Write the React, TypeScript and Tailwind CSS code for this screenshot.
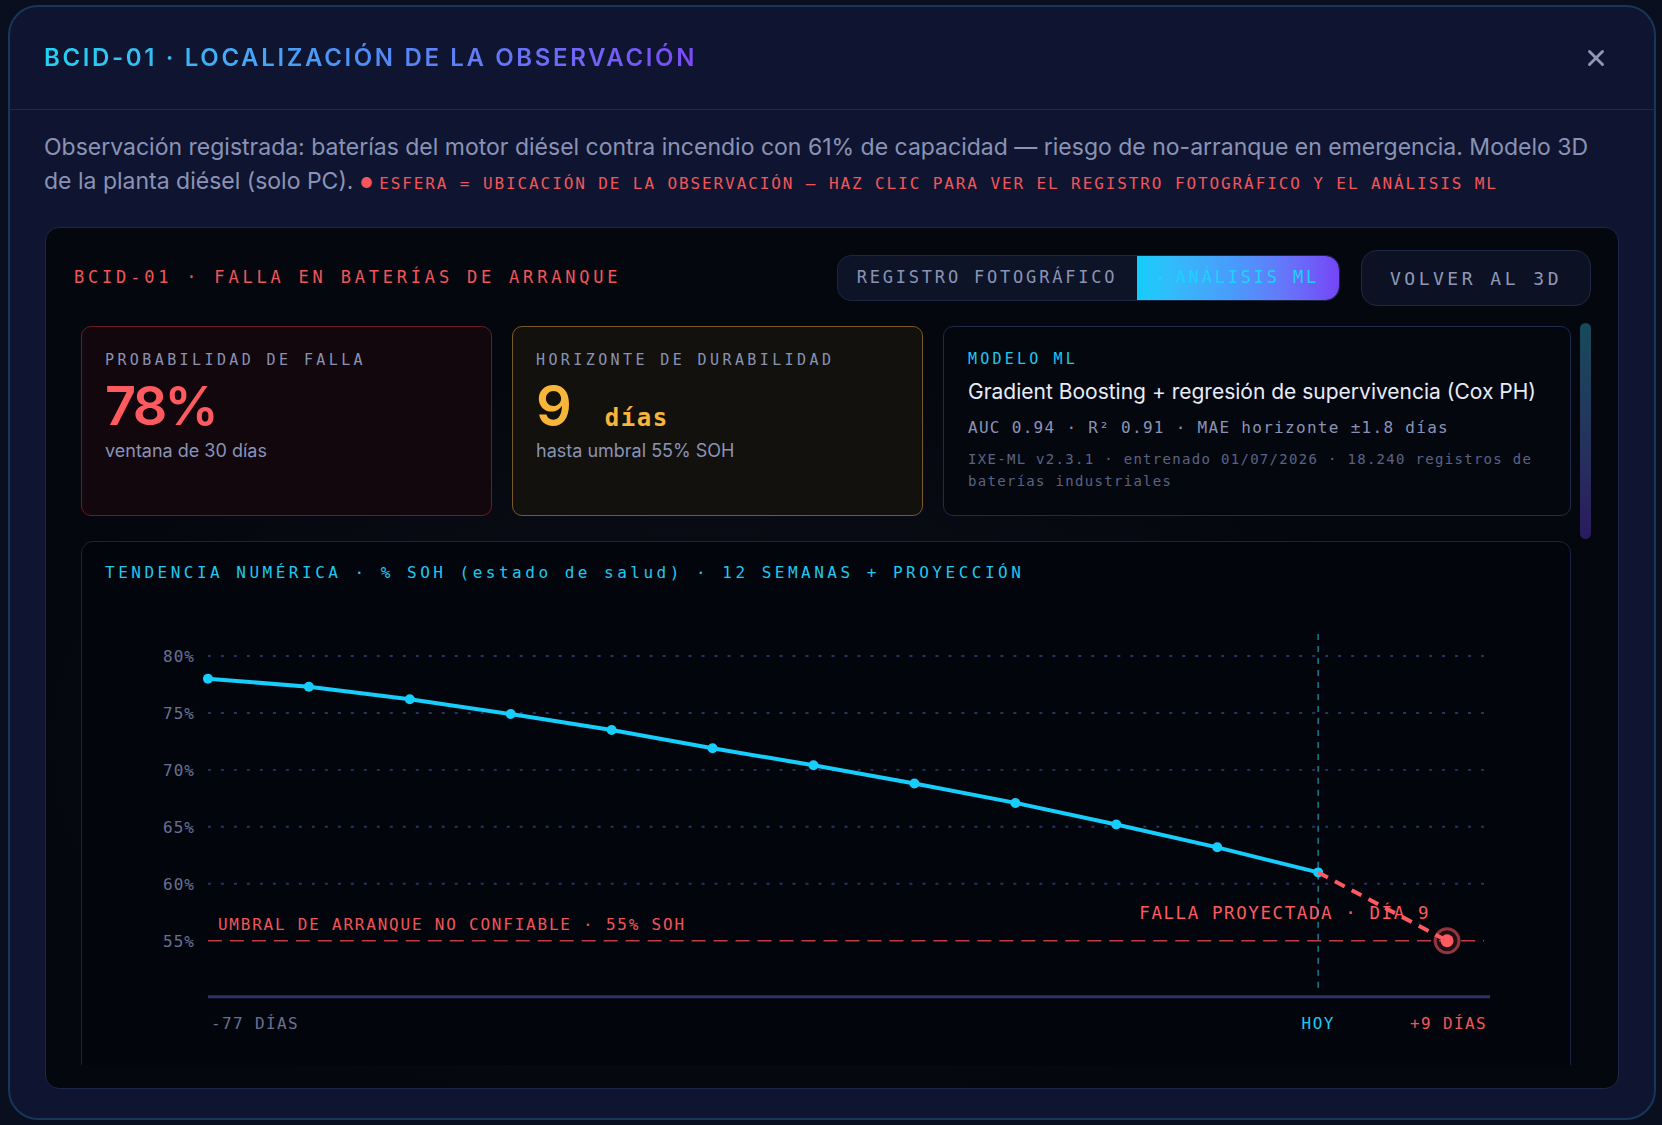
import { X } from "lucide-react";

const MONO = "font-['DejaVu_Sans_Mono',monospace]";

// % SOH semanal, 12 semanas hasta hoy
const soh = [78.0, 77.3, 76.2, 74.9, 73.5, 71.9, 70.4, 68.8, 67.1, 65.2, 63.2, 61.0];

const xOf = (i: number) => 126 + i * 101;
const yOf = (v: number) => 65 + (80 - v) * 11.4;

function TrendChart() {
  const grid = [80, 75, 70, 65, 60];
  const path = soh.map((v, i) => `${i === 0 ? "M" : "L"}${xOf(i)} ${yOf(v)}`).join(" ");
  const hoyX = xOf(11);
  const endX = 1366;
  const endY = yOf(55);

  return (
    <svg viewBox="0 0 1489 490" className={`block h-auto w-full ${MONO}`}>
      {/* grid */}
      {grid.map((g) => (
        <g key={g}>
          <line x1={126} x2={1403} y1={yOf(g)} y2={yOf(g)} stroke="#2a3360" strokeWidth={2} strokeDasharray="3 10" />
          <text x={113} y={yOf(g)} dy="0.36em" textAnchor="end" fill="#687192" fontSize={16} letterSpacing={1}>
            {g}%
          </text>
        </g>
      ))}
      <text x={113} y={endY} dy="0.36em" textAnchor="end" fill="#687192" fontSize={16} letterSpacing={1}>
        55%
      </text>

      {/* umbral */}
      <line x1={126} x2={1403} y1={endY} y2={endY} stroke="#e0484e" strokeOpacity={0.85} strokeWidth={1.6} strokeDasharray="14 8" />
      <text x={136} y={333} dy="0.36em" fill="#ef5558" fontSize={16} letterSpacing={1.8}>
        UMBRAL DE ARRANQUE NO CONFIABLE · 55% SOH
      </text>

      {/* hoy */}
      <line x1={hoyX} x2={hoyX} y1={43} y2={401} stroke="#1a7b95" strokeWidth={1.5} strokeDasharray="6 6" />

      {/* eje */}
      <line x1={126} x2={1409} y1={406} y2={406} stroke="#2b3465" strokeWidth={3} />

      {/* serie */}
      <path d={path} fill="none" stroke="#17cdfb" strokeWidth={4} strokeLinejoin="round" />
      {soh.map((v, i) => (
        <circle key={i} cx={xOf(i)} cy={yOf(v)} r={5} fill="#17cdfb" />
      ))}

      {/* proyección */}
      <line x1={hoyX} y1={yOf(soh[11])} x2={endX} y2={endY} stroke="#ff5a5f" strokeWidth={4} strokeDasharray="11 8" />
      <text x={1349} y={322} dy="0.36em" textAnchor="end" fill="#ff5a5f" fontSize={17.5} letterSpacing={1.6}>
        FALLA PROYECTADA · DÍA 9
      </text>
      <circle cx={endX} cy={endY} r={12} fill="#ff5a5f" fillOpacity={0.12} stroke="#ff5a5f" strokeOpacity={0.55} strokeWidth={3} />
      <circle cx={endX} cy={endY} r={6.5} fill="#ff5a5f" />

      {/* etiquetas eje x */}
      <text x={129} y={433} dy="0.36em" fill="#687192" fontSize={16} letterSpacing={1.4}>
        -77 DÍAS
      </text>
      <text x={hoyX} y={433} dy="0.36em" textAnchor="middle" fill="#1fc8f0" fontSize={16} letterSpacing={1.4}>
        HOY
      </text>
      <text x={1406} y={433} dy="0.36em" textAnchor="end" fill="#f0575b" fontSize={16} letterSpacing={1.4}>
        +9 DÍAS
      </text>
    </svg>
  );
}

export default function App() {
  return (
    <div className="h-screen w-full bg-[#0a0f1f] pt-[5px] pr-[6px] pb-[5px] pl-[8px] font-['Inter',sans-serif]">
      <div className="flex h-full flex-col overflow-hidden rounded-[30px] border-2 border-[#17365a] bg-[#0f1530]">
        {/* Header */}
        <header className="flex h-[103px] shrink-0 items-center justify-between border-b border-[#1e2a4c] pl-[34px] pr-[45px]">
          <h1 className="bg-gradient-to-r from-[#1fd2f2] via-[#4f8df6] to-[#7a4af6] bg-clip-text text-[24px] font-semibold tracking-[0.11em] text-transparent">
            BCID-01 · LOCALIZACIÓN DE LA OBSERVACIÓN
          </h1>
          <X className="h-[26px] w-[26px] text-[#8f98b8]" strokeWidth={2.6} />
        </header>

        {/* Description */}
        <p className="shrink-0 px-[34px] pt-[20px] text-[23px] leading-[34px] text-[#8a93b5]">
          Observación registrada: baterías del motor diésel contra incendio con 61% de capacidad — riesgo de no-arranque en emergencia. Modelo 3D de la planta diésel (solo PC).{" "}
          <span className="align-[1px] text-[14px] text-[#f2555a]">●</span>{" "}
          <span className={`${MONO} text-[16px] tracking-[1.9px] text-[#f2555a]`}>
            ESFERA = UBICACIÓN DE LA OBSERVACIÓN — HAZ CLIC PARA VER EL REGISTRO FOTOGRÁFICO Y EL ANÁLISIS ML
          </span>
        </p>

        {/* Panel */}
        <section className="mx-[35px] mt-[26px] mb-[29px] flex min-h-0 flex-1 flex-col rounded-[14px] border border-[#1b2648] bg-[radial-gradient(ellipse_at_42%_60%,#0d1019_0%,#05070f_55%)] px-[27px] pt-[22px] pb-[23px]">
          <div className="flex h-[56px] shrink-0 items-center justify-between pl-[1px]">
            <h2 className={`${MONO} text-[17px] tracking-[3.8px] text-[#f0555a]`}>
              BCID-01 · FALLA EN BATERÍAS DE ARRANQUE
            </h2>
            <div className="flex items-center gap-[21px]">
              <div className={`${MONO} flex h-[46px] overflow-hidden rounded-[14px] border border-[#1c2542] bg-[#0e1427] text-[17px] tracking-[2.8px]`}>
                <button className="pl-[19px] pr-[20px] text-[#8a93b5]">REGISTRO FOTOGRÁFICO</button>
                <button className="flex items-center gap-[10px] rounded-r-[14px] bg-gradient-to-r from-[#12cdfb] via-[#4a98fb] to-[#7444f6] pl-[20px] pr-[20px] text-[#1fd0ff]">
                  <span className="text-[9px]">◆</span>
                  ANÁLISIS ML
                </button>
              </div>
              <button className={`${MONO} h-[56px] rounded-[16px] border border-[#1f2845] bg-[#0c1224] px-[28px] text-[18px] tracking-[3.5px] text-[#8f98b8]`}>
                VOLVER AL 3D
              </button>
            </div>
          </div>

          {/* Scroll area */}
          <div className="mt-[17px] flex min-h-0 flex-1 overflow-hidden">
            <div className="min-w-0 flex-1 pt-[3px] pl-[8px] pr-[9px]">
              {/* KPI cards */}
              <div className="grid h-[190px] grid-cols-[411px_411px_1fr] gap-[20px]">
                <div className="rounded-[10px] border border-[#6e1b24] bg-[#12070d] px-[23px] pt-[23px]">
                  <div className={`${MONO} text-[15px] leading-[20px] tracking-[3.4px] text-[#8a93b5]`}>
                    PROBABILIDAD DE FALLA
                  </div>
                  <div className="mt-[8px] text-[54px] font-semibold leading-[56px] tracking-[-0.05em] text-[#ff5a5f]">
                    78%
                  </div>
                  <div className="mt-[5px] text-[18px] leading-[24px] text-[#8a93b5]">ventana de 30 días</div>
                </div>

                <div className="rounded-[10px] border border-[#7a5a24] bg-[#12110d] px-[23px] pt-[23px]">
                  <div className={`${MONO} text-[15px] leading-[20px] tracking-[3.4px] text-[#8a93b5]`}>
                    HORIZONTE DE DURABILIDAD
                  </div>
                  <div className="mt-[8px] flex h-[56px] items-baseline">
                    <span className="text-[56px] font-semibold leading-[56px] text-[#f7b53a]">9</span>
                    <span className={`${MONO} ml-[33px] text-[24px] font-bold leading-none tracking-[1.5px] text-[#f7b53a]`}>
                      días
                    </span>
                  </div>
                  <div className="mt-[5px] text-[18px] leading-[24px] text-[#8a93b5]">hasta umbral 55% SOH</div>
                </div>

                <div className="rounded-[10px] border border-[#1f2a4c] bg-[#05070f] px-[24px] pt-[22px]">
                  <div className={`${MONO} text-[15px] leading-[20px] tracking-[3.2px] text-[#1fc8f0]`}>MODELO ML</div>
                  <div className="mt-[9px] text-[21px] leading-[28px] text-[#e8ecf8]">
                    Gradient Boosting + regresión de supervivencia (Cox PH)
                  </div>
                  <div className={`${MONO} mt-[10px] text-[16px] leading-[24px] tracking-[1.3px] text-[#8a93b5]`}>
                    AUC 0.94 · R² 0.91 · MAE horizonte ±1.8 días
                  </div>
                  <div className={`${MONO} mt-[8px] text-[14px] leading-[22px] tracking-[1.3px] text-[#5a6385]`}>
                    IXE-ML v2.3.1 · entrenado 01/07/2026 · 18.240 registros de baterías industriales
                  </div>
                </div>
              </div>

              {/* Trend */}
              <div className="mt-[25px] rounded-[12px] border border-[#1a2346] bg-[#03050c] pt-[21px] pb-[80px]">
                <div className={`${MONO} px-[23px] text-[16px] leading-[20px] tracking-[3.5px] text-[#1fc8f0]`}>
                  TENDENCIA NUMÉRICA · % SOH (estado de salud) · 12 SEMANAS + PROYECCIÓN
                </div>
                <div className="mt-[8px]">
                  <TrendChart />
                </div>
              </div>
            </div>

            {/* scrollbar */}
            <div className="w-[11px] shrink-0">
              <div className="h-[216px] w-full rounded-full bg-gradient-to-b from-[#164a5a] to-[#2a1a5e]" />
            </div>
          </div>
        </section>
      </div>
    </div>
  );
}
